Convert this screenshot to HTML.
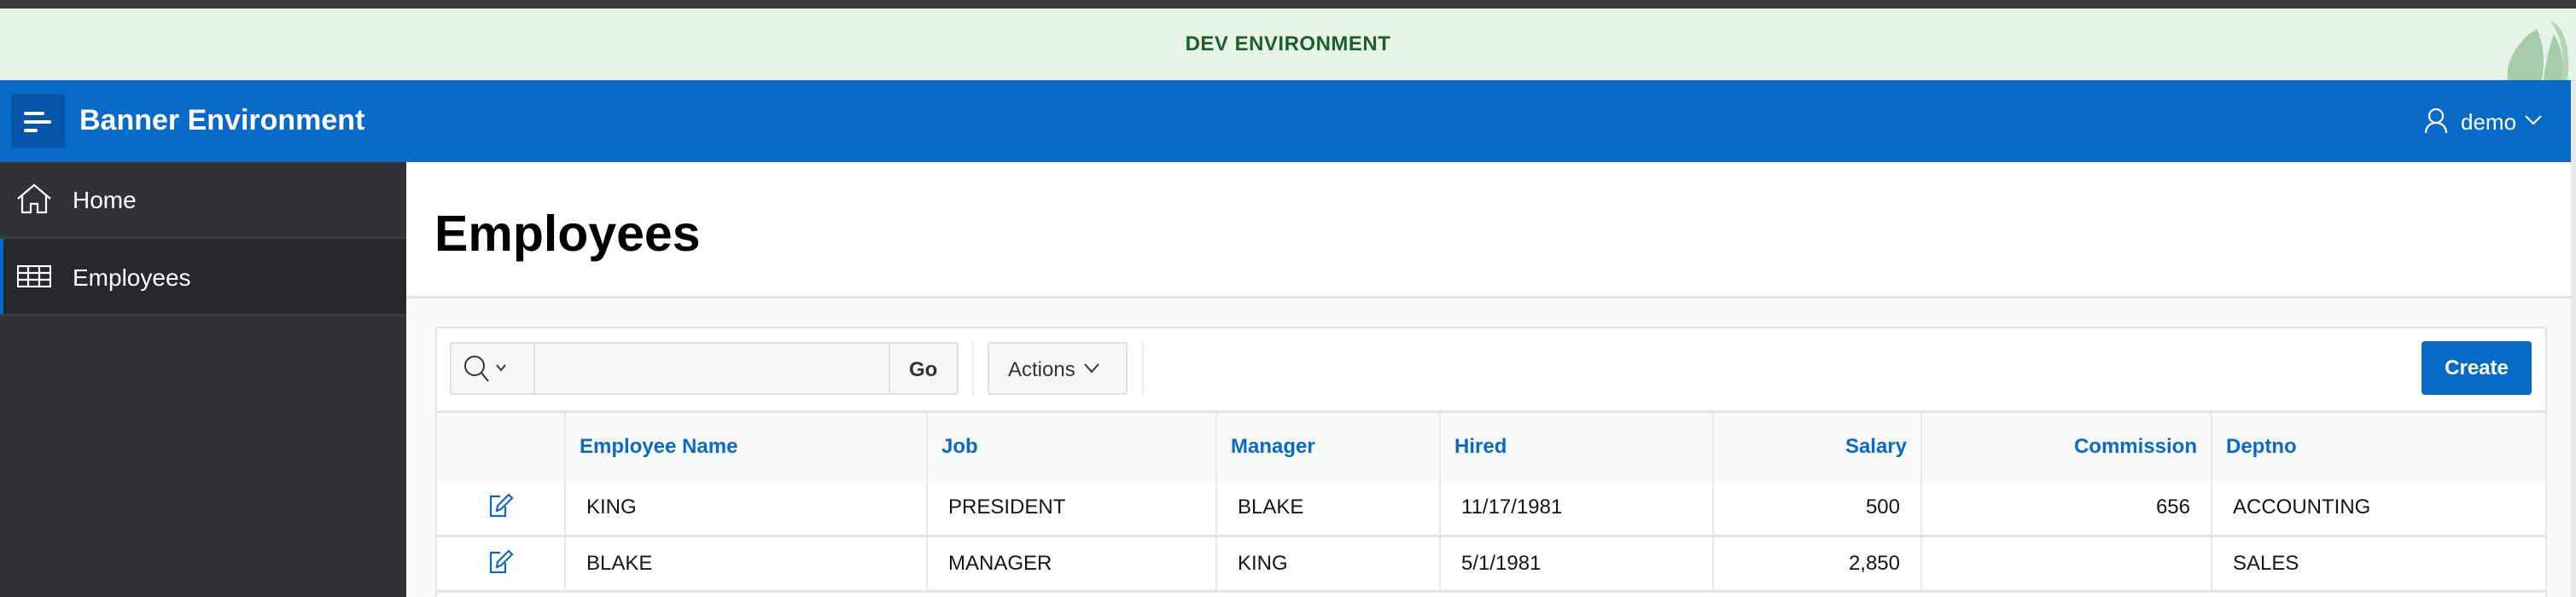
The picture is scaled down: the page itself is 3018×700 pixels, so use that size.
<!DOCTYPE html>
<html style="width:3018px;height:700px;overflow:hidden"><head><meta charset="utf-8"><style>
*{box-sizing:border-box;margin:0;padding:0}
body{width:3018px;height:700px;overflow:hidden;font-family:"Liberation Sans",sans-serif;background:#fafafa;position:relative}
#wrap{position:absolute;left:0;top:0;width:3018px;height:700px;overflow:hidden}
.abs{position:absolute}
.top{left:0;top:0;width:3018px;height:10px;background:#3d3d3d}
.banner{left:0;top:10px;width:3018px;height:84px;background:#e6f4e8;text-align:center;line-height:84px;font-size:24px;font-weight:bold;color:#1f5e2c;letter-spacing:0.5px}
.hdr{left:0;top:94px;width:3018px;height:96px;background:#066ac6;box-shadow:0 2px 4px rgba(0,0,0,.1)}
.side{left:0;top:190px;width:476px;height:510px;background:#2f3237}
.navtxt{color:#fff;font-size:28px;line-height:1}
.main{left:476px;top:190px;width:2538px;height:160px;background:#fff;border-bottom:3px solid #e4e4e4}
.card{left:510px;top:383px;width:2474px;height:317px;background:#fff;border:2px solid #e4e4e4;border-bottom:none;border-radius:3px 3px 0 0}
table{border-collapse:collapse;position:absolute;left:510px;top:481px;width:2474px;font-size:24px}
td,th{border-left:2px solid #e8e8e8;border-right:2px solid #e8e8e8;padding:0 16px;text-align:left;white-space:nowrap}
th{height:81px;background:#f8f9f9;color:#0a6ac6;font-weight:bold;border-top:3px solid #e4e4e4}
td{height:65px;border-bottom:3px solid #e4e4e4;color:#161616;padding:0 24px}
th.r{text-align:right;padding-right:16px}
td.r{text-align:right;padding-right:24px}
</style></head><body><div id="wrap">
<div class="abs top"></div>
<div class="abs banner">DEV ENVIRONMENT</div>
<svg class="abs" style="left:2930px;top:22px" width="80" height="72" viewBox="0 0 80 72"><path d="M42 12 C20 25 5 50 8 72 L48 72 C52 50 50 28 42 12Z" fill="#a8cba9"/><path d="M62 18 C55 38 52 55 50 72 L72 72 C74 50 72 35 62 18Z" fill="#a8cba9"/><path d="M58 2 C75 10 82 35 78 72 L72 72 C75 40 70 20 58 2Z" fill="#b5d4b5"/></svg>
<div class="abs hdr"></div>
<div class="abs" style="left:13px;top:110px;width:63px;height:64px;background:#0556aa;border-radius:4px"></div>
<div class="abs" style="left:28px;top:131px;width:24px;height:4px;background:#fff;border-radius:2px"></div>
<div class="abs" style="left:28px;top:141px;width:32px;height:4px;background:#fff;border-radius:2px"></div>
<div class="abs" style="left:28px;top:151px;width:16px;height:4px;background:#fff;border-radius:2px"></div>
<div class="abs" style="left:93px;top:122px;color:#fff;font-size:34px;font-weight:bold">Banner Environment</div>
<svg class="abs" style="left:2840px;top:126px" width="28" height="32" viewBox="0 0 28 32" fill="none" stroke="#fff" stroke-width="2.2"><circle cx="14" cy="10" r="8"/><path d="M2 30 C2 22 8 18 14 18 C20 18 26 22 26 30"/></svg>
<div class="abs" style="left:2883px;top:128px;color:#fff;font-size:26px">demo</div>
<svg class="abs" style="left:2958px;top:135px" width="20" height="12" viewBox="0 0 20 12" fill="none" stroke="#fff" stroke-width="2.2"><path d="M1 1 L10 10 L19 1"/></svg>
<div class="abs side"></div>
<div class="abs" style="left:0;top:278px;width:476px;height:2px;background:#3c3f44"></div>
<div class="abs" style="left:0;top:280px;width:476px;height:88px;background:#26282d"></div>
<div class="abs" style="left:0;top:280px;width:4px;height:88px;background:#066ac6"></div>
<div class="abs" style="left:0;top:368px;width:476px;height:2px;background:#3c3f44"></div>
<svg class="abs" style="left:19px;top:215px" width="42" height="36" viewBox="0 0 42 36" fill="none" stroke="#fff" stroke-width="2.2"><path d="M2 18 L21 2 L40 18 M7 14 L7 34 L17 34 L17 24 L25 24 L25 34 L35 34 L35 14"/></svg>
<div class="abs navtxt" style="left:85px;top:221px">Home</div>
<svg class="abs" style="left:20px;top:311px" width="40" height="26" viewBox="0 0 40 26" fill="none" stroke="#fff" stroke-width="2.2"><rect x="1" y="1" width="38" height="24"/><path d="M1 9 H39 M1 17 H39 M13 1 V25 M26 1 V25"/></svg>
<div class="abs navtxt" style="left:85px;top:312px">Employees</div>
<div class="abs main"></div>
<div class="abs" style="left:509px;top:240px;font-size:59px;font-weight:bold;color:#000">Employees</div>
<div class="abs" style="left:3012px;top:94px;width:6px;height:606px;background:#e8e8e8"></div>
<div class="abs card"></div>
<div class="abs" style="left:527px;top:401px;width:596px;height:62px;background:#f7f7f7;border:2px solid #e0e0e0;border-radius:3px"></div>
<div class="abs" style="left:625px;top:403px;width:418px;height:58px;background:#f8f8f8;border-left:2px solid #e0e0e0;border-right:2px solid #e0e0e0"></div>
<svg class="abs" style="left:542px;top:415px" width="52" height="34" viewBox="0 0 52 34" fill="none" stroke="#333" stroke-width="2"><circle cx="14" cy="14" r="11"/><path d="M22 22 L30 32 M40 13 L45 19 L50 13"/></svg>
<div class="abs" style="left:1065px;top:420px;font-size:24px;font-weight:bold;color:#333">Go</div>
<div class="abs" style="left:1139px;top:401px;width:2px;height:62px;background:#ececec"></div>
<div class="abs" style="left:1157px;top:401px;width:164px;height:62px;background:#f7f7f7;border:2px solid #e0e0e0;border-radius:3px"></div>
<div class="abs" style="left:1181px;top:420px;font-size:24px;color:#333">Actions</div>
<svg class="abs" style="left:1270px;top:426px" width="18" height="12" viewBox="0 0 18 12" fill="none" stroke="#333" stroke-width="2"><path d="M1 1 L9 10 L17 1"/></svg>
<div class="abs" style="left:1338px;top:401px;width:2px;height:62px;background:#ececec"></div>
<div class="abs" style="left:2837px;top:400px;width:129px;height:63px;background:#066ac6;border-radius:4px;color:#fff;font-size:24px;font-weight:bold;text-align:center;line-height:63px">Create</div>
<table>
<tr><th style="width:151px"></th><th style="width:424px">Employee Name</th><th style="width:339px">Job</th><th style="width:262px">Manager</th><th style="width:320px">Hired</th><th class="r" style="width:244px">Salary</th><th class="r" style="width:340px">Commission</th><th>Deptno</th></tr>
<tr><td style="text-align:center"><svg width="30" height="30" viewBox="0 0 30 30" fill="none" stroke="#0a6ac6" stroke-width="2.2"><path d="M14 5 H3 V28 H20 V17"/><path d="M10 22 L11 16 L24 3 L28 7 L15 20 Z"/></svg></td><td>KING</td><td>PRESIDENT</td><td>BLAKE</td><td>11/17/1981</td><td class="r">500</td><td class="r">656</td><td>ACCOUNTING</td></tr>
<tr><td style="text-align:center"><svg width="30" height="30" viewBox="0 0 30 30" fill="none" stroke="#0a6ac6" stroke-width="2.2"><path d="M14 5 H3 V28 H20 V17"/><path d="M10 22 L11 16 L24 3 L28 7 L15 20 Z"/></svg></td><td>BLAKE</td><td>MANAGER</td><td>KING</td><td>5/1/1981</td><td class="r">2,850</td><td class="r"></td><td>SALES</td></tr>
</table>
</div></body></html>
